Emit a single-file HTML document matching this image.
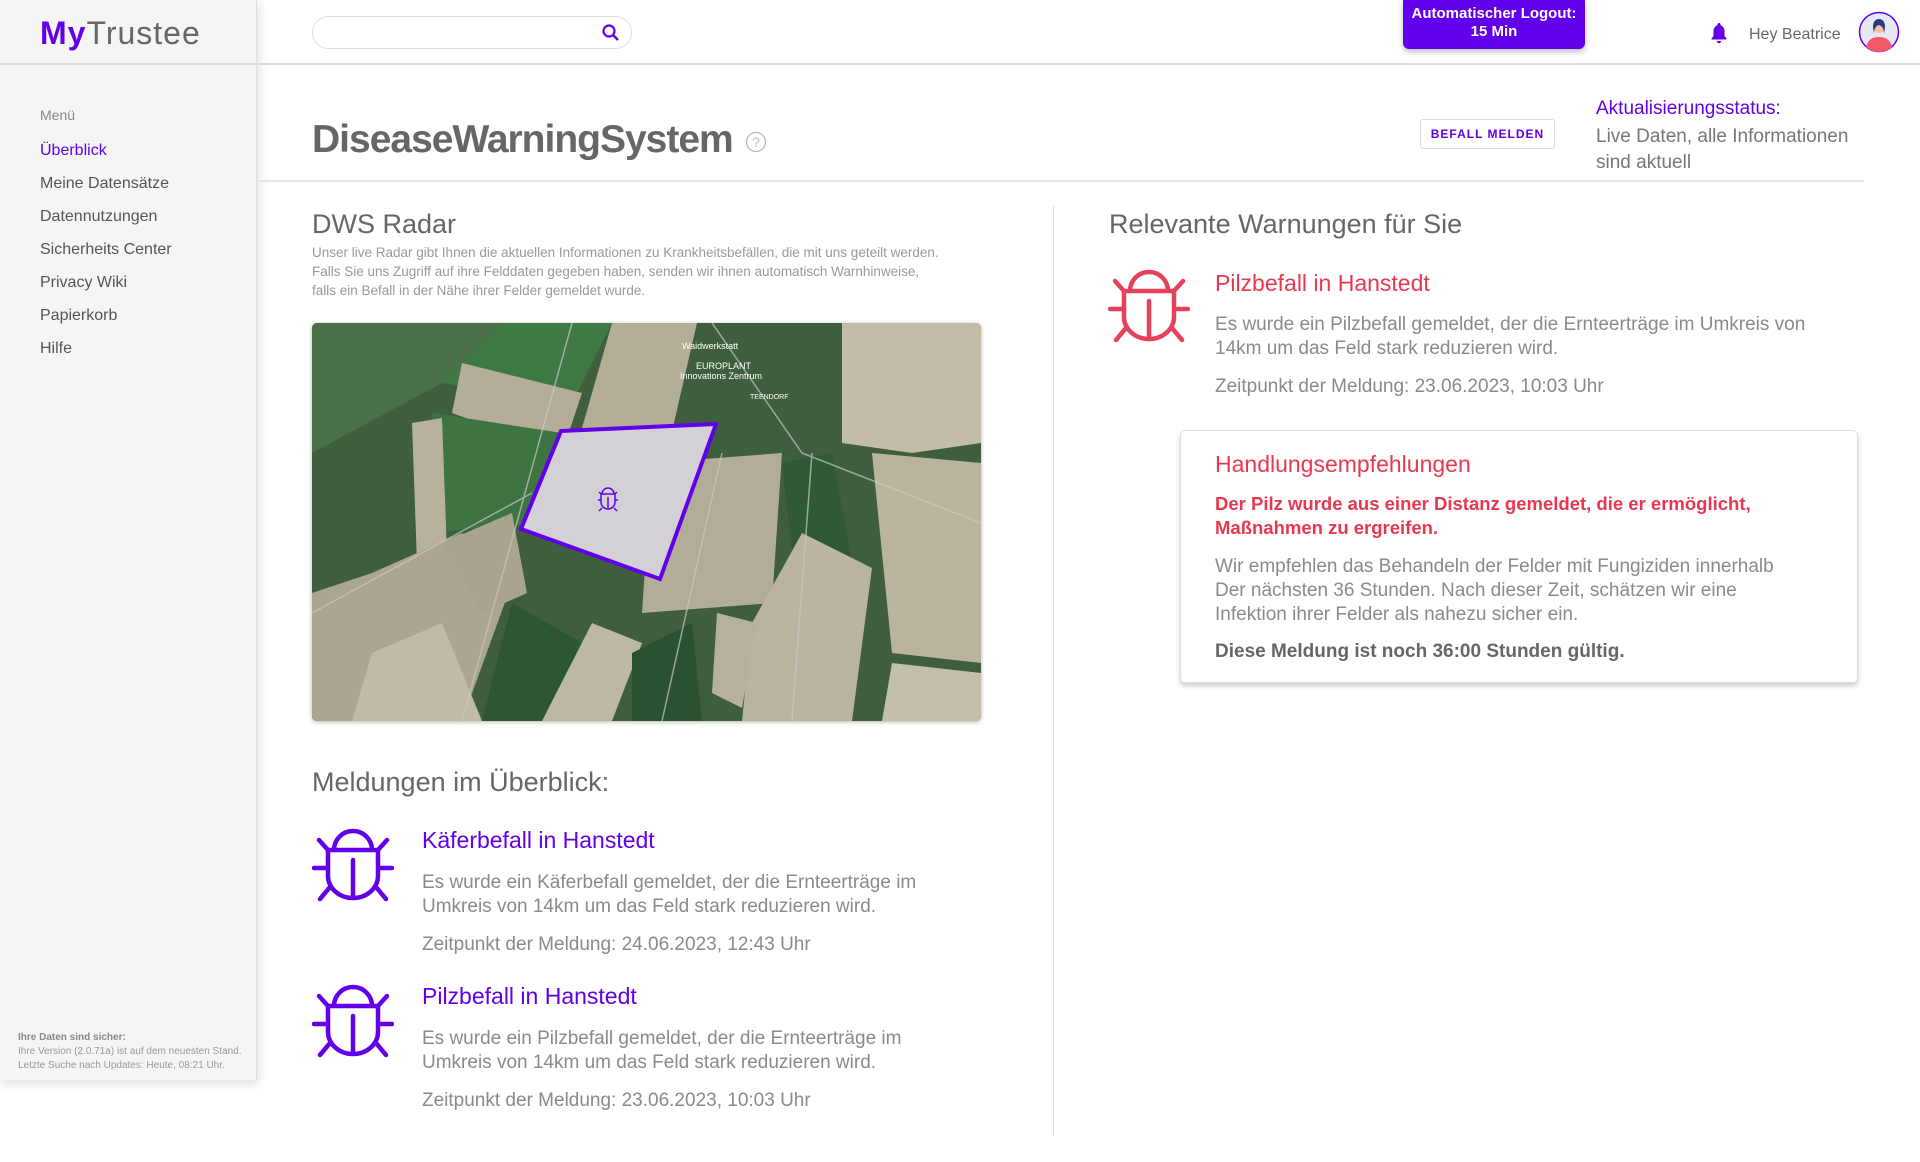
<!DOCTYPE html>
<html><head><meta charset="utf-8"><style>
*{margin:0;padding:0;box-sizing:border-box}
body{width:1920px;height:1162px;background:#fff;font-family:"Liberation Sans",sans-serif;position:relative;overflow:hidden;color:#666}
.a{position:absolute;white-space:nowrap}
#side{position:absolute;left:0;top:0;width:257px;height:1080px;background:#f5f5f5;border-right:1px solid #ddd;box-shadow:2px 4px 10px rgba(0,0,0,.12)}
.mi{position:absolute;left:40px;font-size:16px;color:#555}
.p{color:#6200ea}
.r{color:#e8384f}
.d{font-size:19px;color:#8a8a8a;line-height:24px;white-space:normal}
</style></head><body>
<div id="side">
<div class="a" style="left:40px;top:15px;font-size:32px;letter-spacing:1px"><b class="p">My</b><span style="color:#666">Trustee</span></div>
<div style="position:absolute;left:0;top:63px;width:257px;border-top:2px solid #ddd"></div>
<div class="mi" style="top:107px;font-size:14px;color:#888">Menü</div>
<div class="mi p" style="top:142px">Überblick</div>
<div class="mi" style="top:175px">Meine Datensätze</div>
<div class="mi" style="top:208px">Datennutzungen</div>
<div class="mi" style="top:241px">Sicherheits Center</div>
<div class="mi" style="top:274px">Privacy Wiki</div>
<div class="mi" style="top:307px">Papierkorb</div>
<div class="mi" style="top:340px">Hilfe</div>
<div class="a" style="left:18px;top:1031px;font-size:10px;line-height:14px;color:#999"><b style="color:#888">Ihre Daten sind sicher:</b><br>Ihre Version (2.0.71a) ist auf dem neuesten Stand.<br>Letzte Suche nach Updates: Heute, 08:21 Uhr.</div>
</div>
<div style="position:absolute;left:257px;top:63px;width:1663px;border-top:2px solid #ddd"></div>
<div style="position:absolute;left:312px;top:16px;width:320px;height:33px;border:1px solid #ddd;border-radius:17px"></div>
<svg class="a" style="left:600px;top:22px" width="22" height="22" viewBox="0 0 22 22"><circle cx="9" cy="9" r="5.5" fill="none" stroke="#6200ea" stroke-width="2.2"/><path d="M13 13l5 5" stroke="#6200ea" stroke-width="2.6"/></svg>
<div class="a" style="left:1403px;top:0;width:182px;height:49px;background:#6200ea;border-radius:0 0 6px 6px;box-shadow:0 3px 6px rgba(0,0,0,.25);color:#fff;font-size:15px;font-weight:bold;text-align:center;line-height:18px;padding-top:5px">Automatischer Logout:<br>15 Min</div>
<svg class="a" style="left:1710px;top:22px" width="18" height="22" viewBox="0 0 18 22"><path d="M9 1a1.5 1.5 0 011.5 1.5v.7C13 4 14.5 6.3 14.5 9v5l2 2.5v1H1.5v-1l2-2.5V9C3.5 6.3 5 4 7.5 3.2v-.7A1.5 1.5 0 019 1zM6.8 19h4.4a2.2 2.2 0 01-4.4 0z" fill="#6200ea"/></svg>
<div class="a" style="left:1749px;top:26px;font-size:16px;color:#666">Hey Beatrice</div>
<svg class="a" style="left:1858px;top:11px" width="42" height="42" viewBox="0 0 42 42"><circle cx="21" cy="21" r="19.5" fill="#e6e8f5" stroke="#6200ea" stroke-width="1.5"/><path d="M8 36c2-8 7-10 13-10s11 2 13 10a19 19 0 01-26 0z" fill="#ef5a6a"/><circle cx="21" cy="16" r="6" fill="#f2c2a0"/><path d="M15 16c0-6 3-8 6-8s6 2 6 8l-1 7c0-4-1-8-5-9-4 1-5 5-5 9z" fill="#2a3a80"/></svg>

<div class="a" style="left:312px;top:118px;font-size:39px;font-weight:bold;color:#666;letter-spacing:-1px">DiseaseWarningSystem</div>
<svg class="a" style="left:745px;top:131px" width="22" height="22" viewBox="0 0 22 22"><circle cx="11" cy="11" r="9.5" fill="none" stroke="#bbb" stroke-width="1.3"/><text x="11" y="16" font-size="14" fill="#bbb" text-anchor="middle" font-family="Liberation Sans">?</text></svg>
<div class="a" style="left:1420px;top:119px;width:135px;height:30px;border:1px solid #ddd;border-radius:3px;font-size:12px;font-weight:bold;color:#6200ea;text-align:center;line-height:28px;letter-spacing:1px">BEFALL MELDEN</div>
<div class="a p" style="left:1596px;top:98px;font-size:19px">Aktualisierungsstatus:</div>
<div class="a" style="left:1596px;top:124px;font-size:19px;color:#777;line-height:26px">Live Daten, alle Informationen<br>sind aktuell</div>
<div style="position:absolute;left:257px;top:180px;width:1607px;border-top:2px solid #e6e6e6"></div>

<div class="a" style="left:312px;top:209px;font-size:27px;color:#666">DWS Radar</div>
<div class="a" style="left:312px;top:243px;font-size:13.5px;line-height:19px;color:#999">Unser live Radar gibt Ihnen die aktuellen Informationen zu Krankheitsbefällen, die mit uns geteilt werden.<br>Falls Sie uns Zugriff auf ihre Felddaten gegeben haben, senden wir ihnen automatisch Warnhinweise,<br>falls ein Befall in der Nähe ihrer Felder gemeldet wurde.</div>

<svg class="a" style="left:312px;top:323px;border-radius:5px;box-shadow:0 1px 4px rgba(0,0,0,.3)" width="669" height="398" viewBox="0 0 669 398">
<rect width="669" height="398" fill="#3f5e3e"/>
<polygon points="0,0 190,0 130,60 0,130" fill="#4a7048"/>
<polygon points="190,0 300,0 260,80 130,60" fill="#3f7a45"/>
<polygon points="300,0 385,0 355,130 260,140" fill="#b3ae96"/>
<polygon points="150,40 270,70 250,130 140,90" fill="#b4ae98"/>
<polygon points="120,90 250,110 230,200 110,210" fill="#3e7342"/>
<polygon points="100,100 130,95 135,230 105,240" fill="#b8b29c"/>
<polygon points="0,270 60,250 150,210 200,260 150,398 0,398" fill="#aaa690"/>
<polygon points="60,330 130,300 170,398 40,398" fill="#c0bba5"/>
<polygon points="130,220 200,190 215,270 170,290" fill="#a8a48e"/>
<polygon points="200,280 270,320 250,398 170,398" fill="#2d5732"/>
<polygon points="230,398 280,300 330,320 300,398" fill="#bdb8a2"/>
<polygon points="340,140 470,130 460,280 330,290" fill="#b2ad96"/>
<polygon points="470,140 520,130 540,240 480,230" fill="#2f5a35"/>
<polygon points="490,210 560,245 540,398 430,398 440,300" fill="#b9b49e"/>
<polygon points="530,0 669,0 669,120 600,130 530,120" fill="#c2bda6"/>
<polygon points="560,130 669,140 669,340 580,330" fill="#bab49d"/>
<polygon points="580,340 669,350 669,398 570,398" fill="#c4bfa9"/>
<polygon points="405,290 445,300 430,385 400,370" fill="#b6b19a"/>
<polygon points="320,330 380,300 390,398 320,398" fill="#2a5230" />
<path d="M0,290 L220,170 M260,0 L150,398 M400,0 L490,130 L669,200 M350,398 L410,130 M500,130 L480,398" stroke="#c8c8c8" stroke-width="1.5" fill="none" opacity=".7"/>
<polygon points="249,108 404,101 348,256 209,206" fill="#d4d1d6" stroke="#6200ea" stroke-width="4"/>
<g transform="translate(286,165)" fill="none" stroke="#6200ea" stroke-width="1.5"><path d="M4 6a6 6 0 0112 0M3 6h14v8a7 7 0 01-14 0zM10 9v11M0 12h3M17 12h3M1 4l2 2M19 4l-2 2M1 23l3-3M19 23l-3-3"/></g>
<text x="370" y="26" font-size="9" fill="#fff" font-family="Liberation Sans">Waidwerkstatt</text>
<text x="384" y="46" font-size="9" fill="#fff" font-family="Liberation Sans">EUROPLANT</text>
<text x="368" y="56" font-size="9" fill="#fff" font-family="Liberation Sans">Innovations Zentrum</text>
<text x="438" y="76" font-size="7" fill="#fff" font-family="Liberation Sans">TEENDORF</text>
</svg>

<div style="position:absolute;left:1053px;top:206px;height:930px;border-left:1px solid #ddd"></div>

<div class="a" style="left:312px;top:767px;font-size:27px;color:#666">Meldungen im Überblick:</div>
<svg class="a" style="left:312px;top:824px" width="82" height="78" viewBox="0 0 82 78"><g fill="none" stroke="#6200ea" stroke-width="4.5" stroke-linecap="round"><path d="M22 26a19 19 0 0138 0M16 26h50v26a25 22 0 01-50 0zM41 36v38M2 44h14M66 44h14M7 16l9 10M75 16l-9 10M8 75l10-12M74 75l-10-12"/></g></svg>
<div class="a p" style="left:422px;top:827px;font-size:23px">Käferbefall in Hanstedt</div>
<div class="a d" style="left:422px;top:871px;width:540px">Es wurde ein Käferbefall gemeldet, der die Ernteerträge im Umkreis von 14km um das Feld stark reduzieren wird.</div>
<div class="a d" style="left:422px;top:933px">Zeitpunkt der Meldung: 24.06.2023, 12:43 Uhr</div>

<svg class="a" style="left:312px;top:980px" width="82" height="78" viewBox="0 0 82 78"><g fill="none" stroke="#6200ea" stroke-width="4.5" stroke-linecap="round"><path d="M22 26a19 19 0 0138 0M16 26h50v26a25 22 0 01-50 0zM41 36v38M2 44h14M66 44h14M7 16l9 10M75 16l-9 10M8 75l10-12M74 75l-10-12"/></g></svg>
<div class="a p" style="left:422px;top:983px;font-size:23px">Pilzbefall in Hanstedt</div>
<div class="a d" style="left:422px;top:1027px;width:540px">Es wurde ein Pilzbefall gemeldet, der die Ernteerträge im Umkreis von 14km um das Feld stark reduzieren wird.</div>
<div class="a d" style="left:422px;top:1089px">Zeitpunkt der Meldung: 23.06.2023, 10:03 Uhr</div>

<div class="a" style="left:1109px;top:209px;font-size:27px;color:#666">Relevante Warnungen für Sie</div>
<svg class="a" style="left:1108px;top:265px" width="82" height="78" viewBox="0 0 82 78"><g fill="none" stroke="#e8415c" stroke-width="4.5" stroke-linecap="round"><path d="M22 26a19 19 0 0138 0M16 26h50v26a25 22 0 01-50 0zM41 36v38M2 44h14M66 44h14M7 16l9 10M75 16l-9 10M8 75l10-12M74 75l-10-12"/></g></svg>
<div class="a r" style="left:1215px;top:270px;font-size:23px">Pilzbefall in Hanstedt</div>
<div class="a d" style="left:1215px;top:313px;width:640px">Es wurde ein Pilzbefall gemeldet, der die Ernteerträge im Umkreis von 14km um das Feld stark reduzieren wird.</div>
<div class="a d" style="left:1215px;top:375px">Zeitpunkt der Meldung: 23.06.2023, 10:03 Uhr</div>

<div class="a" style="left:1180px;top:430px;width:678px;height:253px;border:1px solid #ddd;border-radius:5px;box-shadow:0 3px 5px rgba(0,0,0,.2)"></div>
<div class="a r" style="left:1215px;top:451px;font-size:23px">Handlungsempfehlungen</div>
<div class="a r" style="left:1215px;top:492px;font-size:18.5px;font-weight:bold;line-height:24px">Der Pilz wurde aus einer Distanz gemeldet, die er ermöglicht,<br>Maßnahmen zu ergreifen.</div>
<div class="a d" style="left:1215px;top:555px">Wir empfehlen das Behandeln der Felder mit Fungiziden innerhalb<br>Der nächsten 36 Stunden. Nach dieser Zeit, schätzen wir eine<br>Infektion ihrer Felder als nahezu sicher ein.</div>
<div class="a" style="left:1215px;top:641px;font-size:19px;font-weight:bold;color:#666">Diese Meldung ist noch 36:00 Stunden gültig.</div>
</body></html>
